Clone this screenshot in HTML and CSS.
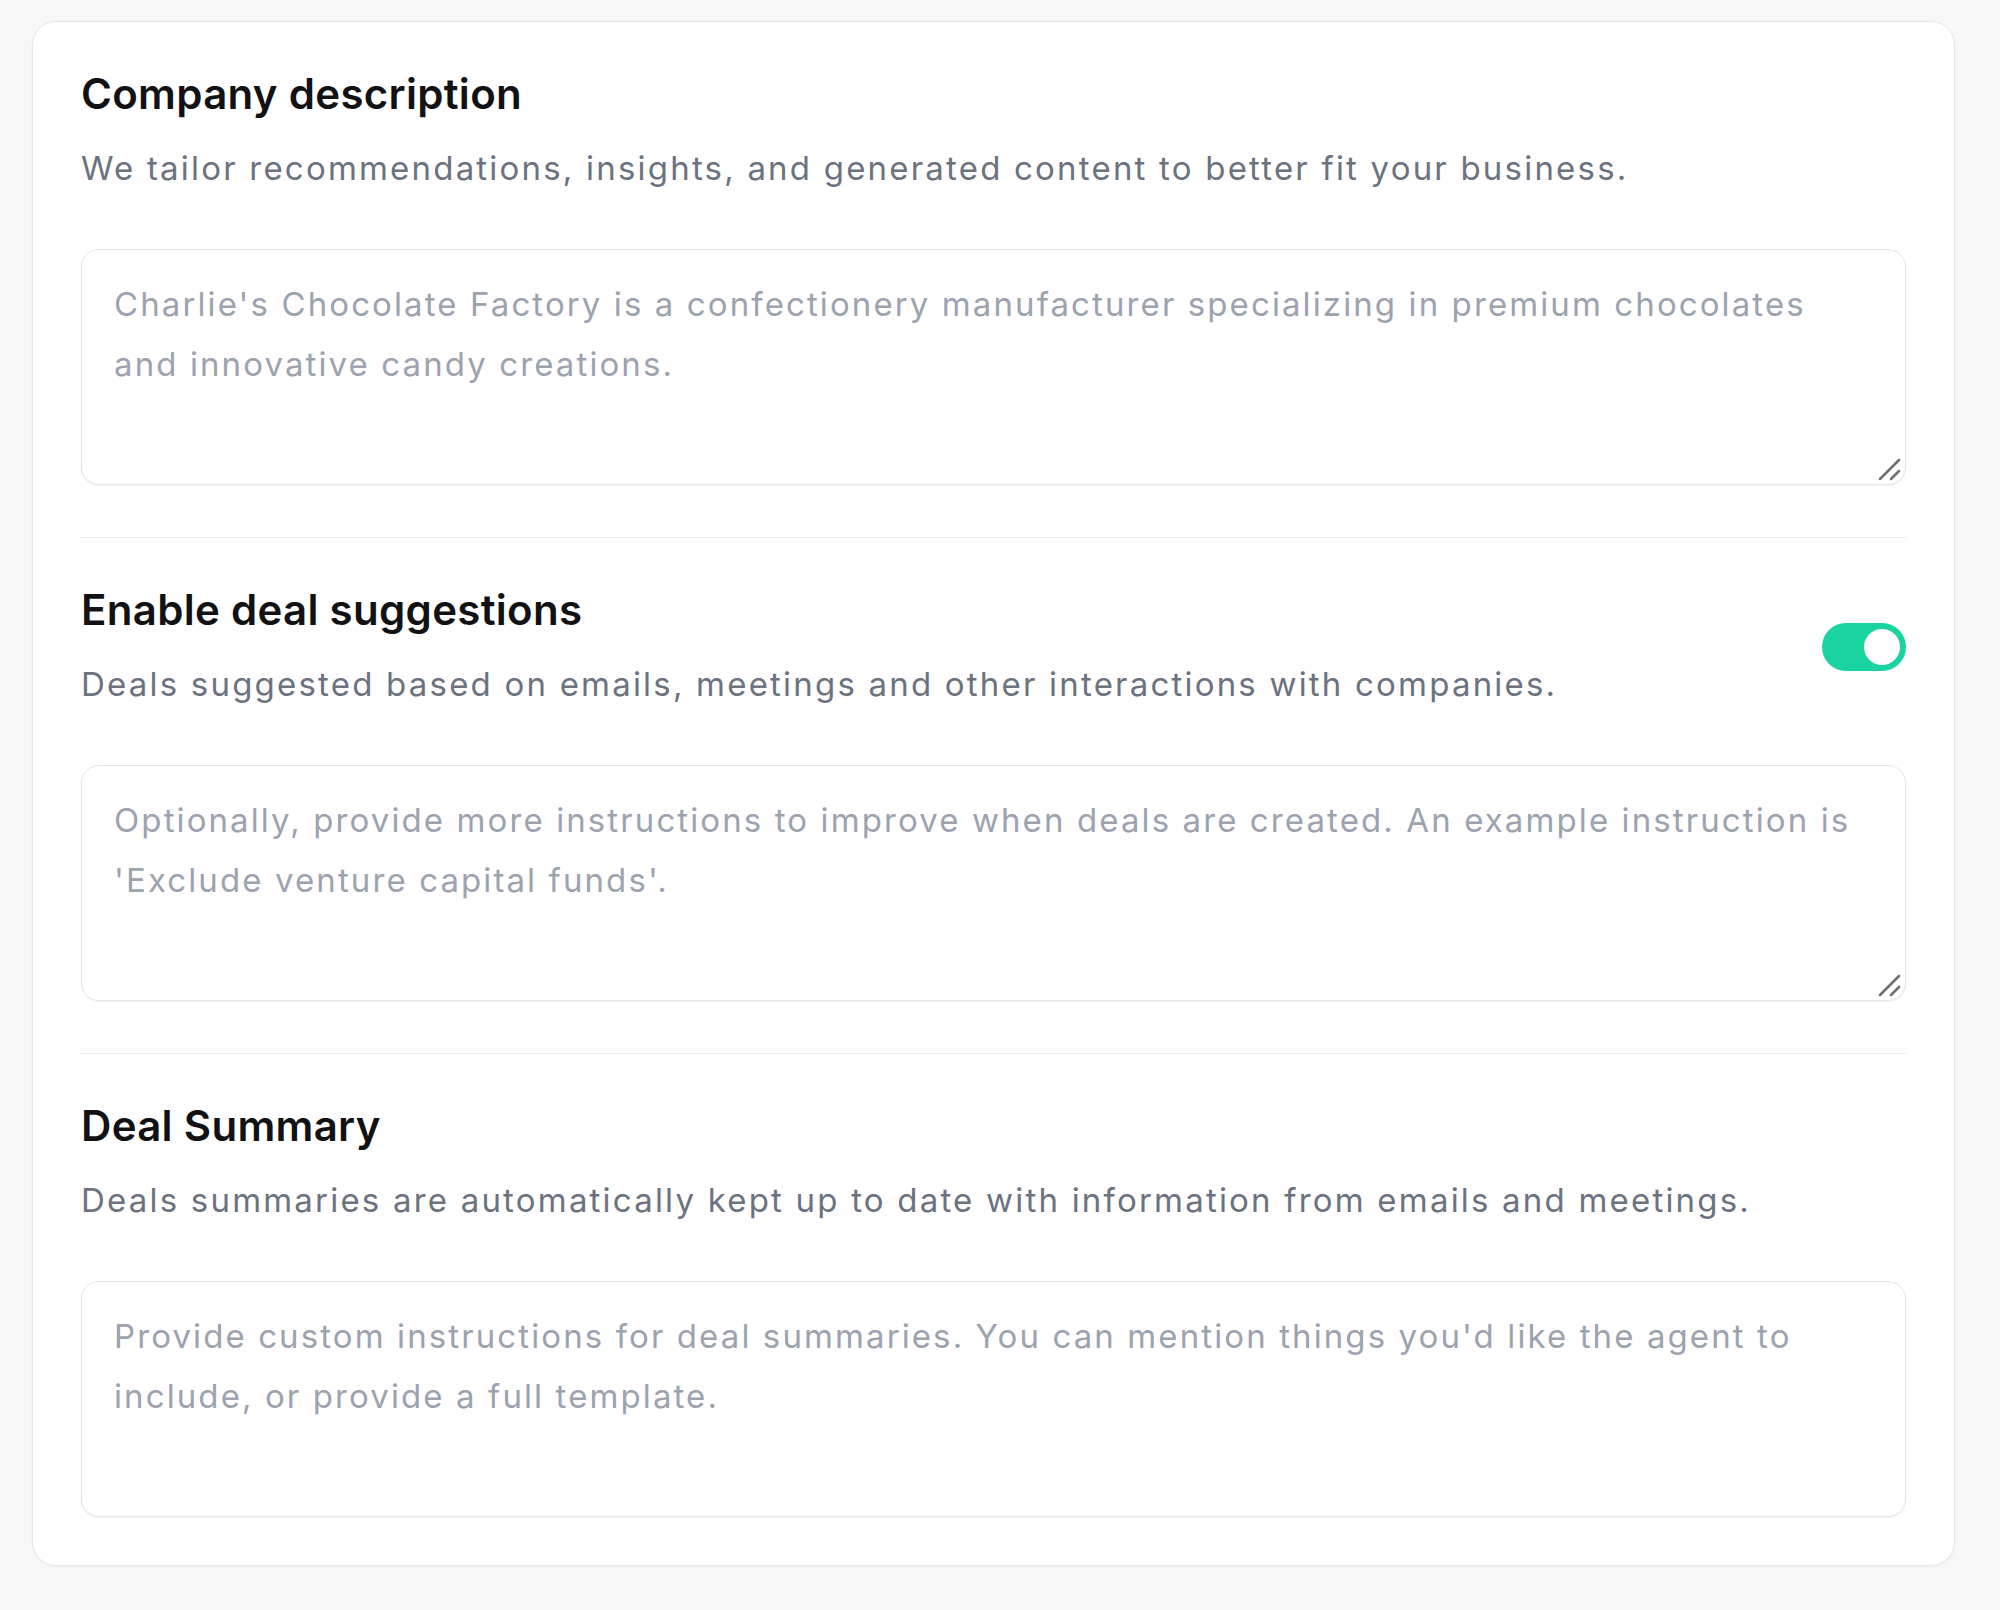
FILE: index.html
```html
<!DOCTYPE html>
<html lang="en">
<head>
  <meta charset="UTF-8" />
  <title>Agent settings</title>
  <link rel="stylesheet" href="styles.css">
</head>
<body>

  <main class="card">

    <!-- Company description -->
    <section class="setting">
      <div class="setting-head">
        <div>
          <h2>Company description</h2>
          <p class="hint">We tailor recommendations, insights, and generated content to better fit your business.</p>
        </div>
      </div>
      <div class="field">
        <textarea placeholder="Charlie's Chocolate Factory is a confectionery manufacturer specializing in premium chocolates and innovative candy creations."></textarea>
        <svg class="grip" width="26" height="26" viewBox="0 0 26 26"><path d="M2 22L21 3M13 22L21 14" /></svg>
      </div>
    </section>

    <!-- Deal suggestions -->
    <section class="setting">
      <div class="setting-head">
        <div>
          <h2>Enable deal suggestions</h2>
          <p class="hint">Deals suggested based on emails, meetings and other interactions with companies.</p>
        </div>
        <button class="toggle on" aria-pressed="true"><span class="knob"></span></button>
      </div>
      <div class="field">
        <textarea placeholder="Optionally, provide more instructions to improve when deals are created. An example instruction is 'Exclude venture capital funds'."></textarea>
        <svg class="grip" width="26" height="26" viewBox="0 0 26 26"><path d="M2 22L21 3M13 22L21 14" /></svg>
      </div>
    </section>

    <!-- Deal summary -->
    <section class="setting">
      <div class="setting-head">
        <div>
          <h2>Deal Summary</h2>
          <p class="hint">Deals summaries are automatically kept up to date with information from emails and meetings.</p>
        </div>
      </div>
      <div class="field">
        <textarea placeholder="Provide custom instructions for deal summaries. You can mention things you'd like the agent to include, or provide a full template."></textarea>
      </div>
    </section>

  </main>

</body>
</html>
```

FILE: styles.css
```css
body {
  margin: 0;
  padding: 21px 0 40px 32px;
  background: #f8f8f8;
  font-family: Inter, "Noto Sans", sans-serif;
}
.card {
  width: 1825px;
  background: #fff;
  border: 1px solid #e7e7e9;
  border-radius: 24px;
  padding: 48px;
  box-shadow: 0 1px 3px rgba(0,0,0,0.04);
}
.setting {
  padding: 48px 0 52px;
  border-top: 1px solid #ebecee;
}
.setting:first-child {
  padding-top: 0;
  border-top: none;
}
.setting:last-child {
  padding-bottom: 0;
}
.setting-head {
  display: flex;
  align-items: center;
  justify-content: space-between;
  margin-bottom: 57px;
}
h2 {
  margin: 0;
  font-size: 42px;
  line-height: 48px;
  font-weight: 600;
  color: #121214;
  letter-spacing: 0.3px;
}
.hint {
  margin: 26px 0 0;
  font-size: 33px;
  line-height: 48px;
  color: #6b7280;
  letter-spacing: 2.2px;
}
.field {
  position: relative;
}
textarea {
  display: block;
  box-sizing: border-box;
  width: 100%;
  height: 236px;
  padding: 24px 32px;
  border: 1px solid #e4e4e7;
  border-radius: 18px;
  box-shadow: 0 1px 2px rgba(0,0,0,0.05);
  font-family: inherit;
  font-size: 33px;
  line-height: 60px;
  letter-spacing: 2.1px;
  color: #111;
  resize: none;
  outline: none;
}
textarea::placeholder {
  color: #9ca3af;
}
.grip {
  position: absolute;
  right: 2px;
  bottom: 2px;
  fill: none;
  stroke: #6f6f6f;
  stroke-width: 2.5;
  stroke-linecap: round;
}
.toggle {
  flex: none;
  width: 84px;
  height: 48px;
  padding: 6px;
  border: none;
  border-radius: 24px;
  background: #d1d5db;
  display: flex;
  align-items: center;
  cursor: pointer;
}
.toggle.on {
  background: #19d3a0;
  justify-content: flex-end;
}
.knob {
  width: 36px;
  height: 36px;
  border-radius: 50%;
  background: #fff;
}
```
